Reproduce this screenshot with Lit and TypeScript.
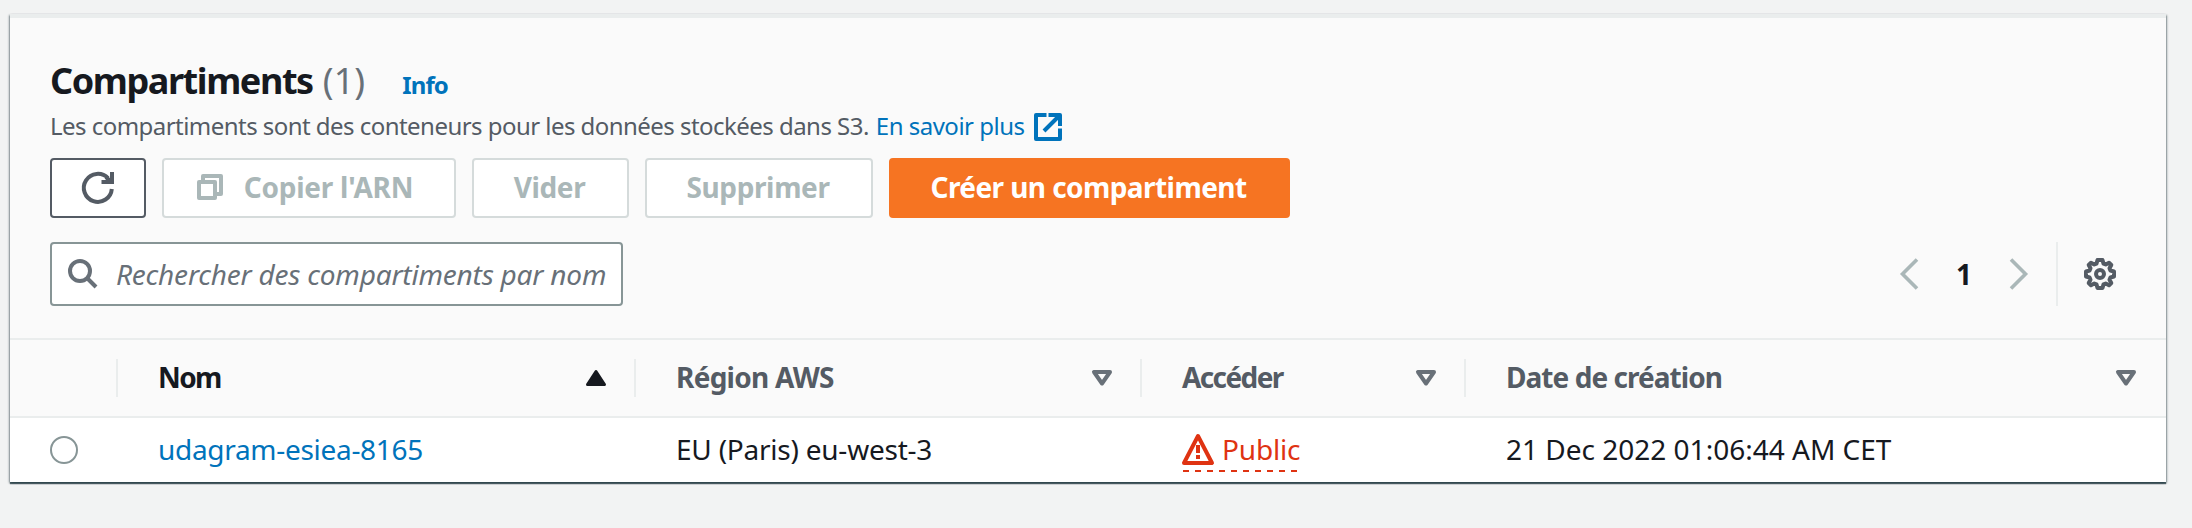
import { LitElement, html, css, svg } from "lit";
import { customElement, property } from "lit/decorators.js";

const icons = {
  refresh: svg`<path d="M29.8 17A14 14 0 1 1 26 6.2" fill="none" stroke="currentColor" stroke-width="4"/><path d="M30 0v10H19.5M24 5l5 5" fill="none" stroke="currentColor" stroke-width="4"/>`,
  copy: svg`<path d="M8 8V4h18v18h-4M4 10h16v16H4z" fill="none" stroke="currentColor" stroke-width="4" stroke-linejoin="round" transform="translate(-2 -2)"/>`,
  external: svg`<path d="M12.500 2H2v24h24V15.500M14.500 2H26V13M26 2L10 18" fill="none" stroke="currentColor" stroke-width="4" stroke-linejoin="round"/>`,
  search: svg`<circle cx="12" cy="12" r="10" fill="none" stroke="currentColor" stroke-width="4"/><path d="M19 19l9 9" fill="none" stroke="currentColor" stroke-width="4"/>`,
  left: svg`<path d="M17 1.500L2.500 16L17 30.500" fill="none" stroke="currentColor" stroke-width="3.600"/>`,
  right: svg`<path d="M1 1.500L15.500 16L1 30.500" fill="none" stroke="currentColor" stroke-width="3.600"/>`,
  gear: svg`<path d="M13.500 2h5l1 3.600 2.200.9 3.300-1.800 2.300 2.300-1.800 3.300.9 2.200 3.600 1v5l-3.600 1-.9 2.200 1.800 3.300-2.300 2.300-3.300-1.800-2.200.9-1 3.600h-5l-1-3.600-2.200-.9-3.300 1.800-2.300-2.300 1.800-3.300-.9-2.200-3.600-1v-5l3.600-1 .9-2.200-1.800-3.300 2.300-2.300 3.300 1.800 2.200-.9z" fill="none" stroke="currentColor" stroke-width="4" stroke-linejoin="round"/><circle cx="16" cy="16" r="4" fill="none" stroke="currentColor" stroke-width="4"/>`,
  sortUp: svg`<path d="M10 1.500L18.500 14.500H1.500z" fill="currentColor" stroke="currentColor" stroke-width="3" stroke-linejoin="round"/>`,
  sortDown: svg`<path d="M2 2H18L10 13.500z" fill="none" stroke="currentColor" stroke-width="4" stroke-linejoin="round"/>`,
  warning: svg`<path d="M16 3L30 30H2z" fill="none" stroke="currentColor" stroke-width="4" stroke-linejoin="round"/><path d="M16 12v8M16 22v4" stroke="currentColor" stroke-width="4"/>`,
};

@customElement("app-icon")
class AppIcon extends LitElement {
  @property() name: keyof typeof icons = "search";
  @property({ type: Number }) w = 32;
  @property({ type: Number }) h = 32;

  static styles = css`
    :host { display: inline-flex; flex: none; }
    svg { display: block; overflow: visible; }
  `;

  render() {
    return html`<svg width=${this.w} height=${this.h} viewBox="0 0 ${this.w} ${this.h}">${icons[this.name]}</svg>`;
  }
}

@customElement("app-root")
class AppRoot extends LitElement {
  static styles = css`
    :host {
      display: block;
      box-sizing: border-box;
      height: 528px;
      padding: 14px 26px 0 10px;
      background: #f2f3f3;
      color: #16191f;
      font: 400 28px/36px "Noto Sans", sans-serif;
      white-space: nowrap;
    }
    * { box-sizing: border-box; }
    .panel {
      height: 468px;
      border-top: 4px solid #eaeded;
      background: #fafafa;
      box-shadow: 0 2px 1px 0 rgba(0, 28, 36, .62), 1px 1px 2px 0 rgba(0, 28, 36, .38), -1px 1px 2px 0 rgba(0, 28, 36, .38);
    }
    .header { height: 320px; padding: 44px 48px 0 40px; }
    .heading { display: flex; align-items: baseline; height: 38px; margin: 0; font-size: 36px; font-weight: 700; letter-spacing: -1.42px; line-height: 38px; }
    .count { margin-left: 10px; color: #687078; font-weight: 400; letter-spacing: .1px; }
    .info { margin-left: 37px; color: #0073bb; font-size: 24px; letter-spacing: -.9px; }
    .intro { display: flex; align-items: center; height: 34px; margin-top: 9px; color: #545b64; font-size: 24px; letter-spacing: -.54px; line-height: 34px; }
    .more { display: flex; align-items: center; gap: 9px; margin-left: 7px; color: #0073bb; letter-spacing: -.5px; }
    .more app-icon { margin-top: 2px; }
    .actions { display: flex; gap: 16px; margin-top: 15px; }
    .button {
      display: flex; align-items: center; justify-content: center;
      height: 60px; padding: 0 2px 2px 0; border: 2px solid #d5dbdb; border-radius: 4px;
      background: #fff; color: #aab7b8; font-weight: 700; letter-spacing: -.37px;
    }
    .refresh { width: 96px; padding: 0; border-color: #545b64; color: #545b64; }
    .copy { width: 294px; gap: 19px; padding-right: 8px; letter-spacing: -.24px; }
    .copy app-icon { margin-top: 2px; }
    .empty { width: 157px; }
    .delete { width: 228px; }
    .create { width: 401px; border-color: #f67422; background: #f67422; color: #fff; letter-spacing: -.57px; }
    .tools { display: flex; align-items: center; justify-content: space-between; margin-top: 24px; }
    .search {
      display: flex; align-items: center; gap: 18px; width: 573px; height: 64px; padding-left: 16px;
      border: 2px solid #879596; border-radius: 4px; background: #fff; color: #687078;
      font-style: italic; letter-spacing: -.2px;
    }
    .pages { display: flex; align-items: center; color: #aab7b8; }
    .page { width: 92px; color: #16191f; font-weight: 700; text-align: center; }
    .settings { display: flex; align-items: center; height: 64px; margin-left: 28px; padding: 0 2px 0 26px; border-left: 2px solid #eaeded; color: #545b64; }
    .grid { display: grid; grid-template-columns: 108px 518px 506px 324px 1fr; align-items: center; }
    .columns { height: 80px; border-top: 2px solid #eaeded; border-bottom: 2px solid #eaeded; color: #545b64; font-weight: 700; letter-spacing: -.72px; }
    .column { display: flex; align-items: center; justify-content: space-between; height: 38px; padding: 0 28px 0 40px; border-right: 2px solid #eaeded; }
    .column:last-child { border-right: 0; padding-right: 30px; letter-spacing: -.95px; }
    .label { margin-top: -2px; }
    .tight { letter-spacing: -1.6px; }
    .column app-icon { color: #687078; }
    .sorted, .sorted app-icon { color: #16191f; }
    .row { height: 64px; background: #fff; }
    .cell { padding: 0 0 2px 40px; }
    .radio { width: 28px; height: 28px; margin-left: 40px; border: 2px solid #879596; border-radius: 50%; background: #fff; }
    .link { color: #0073bb; letter-spacing: -.3px; }
    .region { letter-spacing: -.23px; }
    .access { padding-top: 4px; }
    .public {
      display: inline-flex; align-items: center; gap: 8px; height: 42px; padding-bottom: 4px; vertical-align: top;
      color: #df3312; letter-spacing: -.18px;
      background: repeating-linear-gradient(90deg, #df3312 0 6px, transparent 6px 12px) 1px 100% / 100% 2px no-repeat;
    }
    .public-text { margin-top: -1px; }
  `;

  column(label: string, icon: string, cls = "") {
    return html`<div class="column ${cls}"><span class="label">${label}</span><app-icon name=${icon} w="20" h="16"></app-icon></div>`;
  }

  render() {
    return html`
      <section class="panel">
        <div class="header">
          <h2 class="heading">Compartiments<span class="count">(1)</span><span class="info">Info</span></h2>
          <div class="intro">
            <span>Les compartiments sont des conteneurs pour les données stockées dans S3.</span>
            <span class="more">En savoir plus<app-icon name="external" w="28" h="28"></app-icon></span>
          </div>
          <div class="actions">
            <div class="button refresh"><app-icon name="refresh" w="32" h="32"></app-icon></div>
            <div class="button copy"><app-icon name="copy" w="28" h="28"></app-icon>Copier l'ARN</div>
            <div class="button empty">Vider</div>
            <div class="button delete">Supprimer</div>
            <div class="button create">Créer un compartiment</div>
          </div>
          <div class="tools">
            <div class="search"><app-icon name="search" w="30" h="30"></app-icon>Rechercher des compartiments par nom</div>
            <div class="pages">
              <app-icon name="left" w="18" h="32"></app-icon>
              <span class="page">1</span>
              <app-icon name="right" w="18" h="32"></app-icon>
              <div class="settings"><app-icon name="gear" w="32" h="32"></app-icon></div>
            </div>
          </div>
        </div>
        <div class="grid columns">
          <div class="column"></div>
          ${this.column("Nom", "sortUp", "sorted tight")}
          ${this.column("Région AWS", "sortDown")}
          ${this.column("Accéder", "sortDown", "tight")}
          ${this.column("Date de création", "sortDown")}
        </div>
        <div class="grid row">
          <div class="radio"></div>
          <div class="cell link">udagram-esiea-8165</div>
          <div class="cell region">EU (Paris) eu-west-3</div>
          <div class="cell access"><span class="public"><app-icon name="warning" w="32" h="32"></app-icon><span class="public-text">Public</span></span></div>
          <div class="cell">21 Dec 2022 01:06:44 AM CET</div>
        </div>
      </section>
    `;
  }
}
